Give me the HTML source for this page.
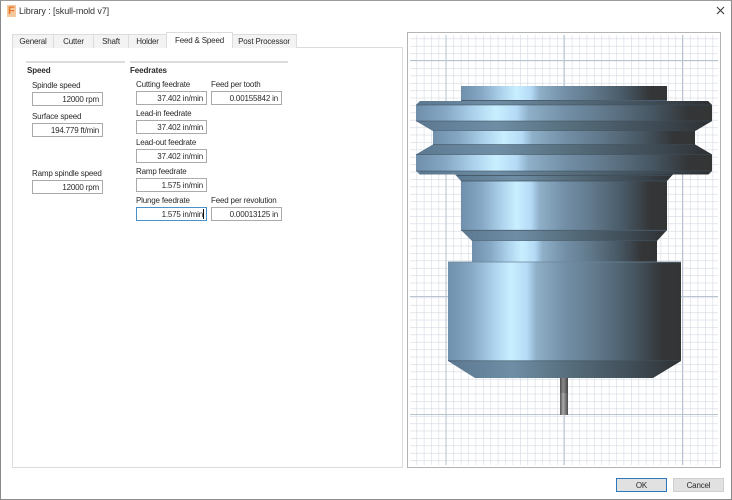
<!DOCTYPE html>
<html><head><meta charset="utf-8">
<style>
html,body{margin:0;padding:0;background:#fff}
#w{position:relative;width:732px;height:500px;overflow:hidden;background:#fff;font-family:"Liberation Sans",sans-serif;font-size:8px;letter-spacing:-.18px;color:#2a2a2a;filter:blur(.3px)}
#w div{position:absolute;box-sizing:border-box;white-space:nowrap}
.l{line-height:12px;height:12px}
.f{width:71px;height:14px;background:#fff;border:1px solid #aaa;text-align:right;padding-right:3px;line-height:13px}
.t{top:34px;height:14px;background:#f3f3f3;border:1px solid #dcdcdc;border-bottom:none;text-align:center;line-height:14px}
.s{height:2px;background:#dcdcdc;top:61px}
.h{font-weight:bold;top:65px;line-height:12px;letter-spacing:-.1px}
</style></head><body>
<div id="w">
<div style="left:0;top:0;width:732px;height:500px;border:1px solid #8a8a8a;border-top-color:#9a9a9a"></div>
<div style="left:7px;top:5px;width:9px;height:12px;background:#f5c9a0"></div>
<div style="left:8px;top:5px;width:8px;height:12px;color:#e8772a;font-weight:bold;font-size:11px;line-height:12px">F</div>
<div style="left:19px;top:5px;font-size:9px;letter-spacing:-.1px;line-height:13px;color:#333">Library : [skull-mold v7]</div>
<svg style="position:absolute;left:716px;top:6px" width="9" height="9" viewBox="0 0 9 9"><path d="M1 1L8 8M8 1L1 8" stroke="#333" stroke-width="1" fill="none"/></svg>

<div style="left:12px;top:47px;width:391px;height:421px;background:#fff;border:1px solid #dcdcdc"></div>
<div class="t" style="left:12px;width:42px">General</div>
<div class="t" style="left:53px;width:41px">Cutter</div>
<div class="t" style="left:93px;width:36px">Shaft</div>
<div class="t" style="left:128px;width:39px">Holder</div>
<div class="t" style="left:231px;width:66px">Post Processor</div>
<div class="t" style="left:166px;width:67px;top:32px;height:16px;background:#fff;line-height:15px">Feed &amp; Speed</div>

<div class="s" style="left:26px;width:99px"></div>
<div class="s" style="left:130px;width:158px"></div>
<div class="h" style="left:27px">Speed</div>
<div class="h" style="left:130px">Feedrates</div>

<div class="l" style="left:32px;top:80px">Spindle speed</div>
<div class="f" style="left:32px;top:92px">12000 rpm</div>
<div class="l" style="left:32px;top:111px">Surface speed</div>
<div class="f" style="left:32px;top:123px">194.779 ft/min</div>
<div class="l" style="left:32px;top:168px">Ramp spindle speed</div>
<div class="f" style="left:32px;top:180px">12000 rpm</div>

<div class="l" style="left:136px;top:79px">Cutting feedrate</div>
<div class="f" style="left:136px;top:91px">37.402 in/min</div>
<div class="l" style="left:211px;top:79px">Feed per tooth</div>
<div class="f" style="left:211px;top:91px">0.00155842 in</div>
<div class="l" style="left:136px;top:108px">Lead-in feedrate</div>
<div class="f" style="left:136px;top:120px">37.402 in/min</div>
<div class="l" style="left:136px;top:137px">Lead-out feedrate</div>
<div class="f" style="left:136px;top:149px">37.402 in/min</div>
<div class="l" style="left:136px;top:166px">Ramp feedrate</div>
<div class="f" style="left:136px;top:178px">1.575 in/min</div>
<div class="l" style="left:136px;top:195px">Plunge feedrate</div>
<div class="f" style="left:136px;top:207px;border-color:#4a90c8">1.575 in/min</div>
<div style="left:203px;top:209px;width:1px;height:10px;background:#111"></div>
<div class="l" style="left:211px;top:195px">Feed per revolution</div>
<div class="f" style="left:211px;top:207px">0.00013125 in</div>

<svg style="position:absolute;left:407px;top:32px" width="314" height="436" viewBox="407 32 314 436">
<defs>
<pattern id="g" x="446" y="60.7" width="7.4" height="7.4" patternUnits="userSpaceOnUse"><path d="M0 0V7.4M0 0H7.4" stroke="#d3dae2" stroke-width="1.2" fill="none"/></pattern>
<linearGradient id="m">
<stop offset="0" stop-color="#6f8fab"/><stop offset=".1" stop-color="#86a8c4"/><stop offset=".2" stop-color="#aed4ee"/><stop offset=".27" stop-color="#c8efff"/><stop offset=".34" stop-color="#b4daf6"/><stop offset=".38" stop-color="#8fb0c8"/><stop offset=".5" stop-color="#7390a8"/><stop offset=".65" stop-color="#5f7688"/><stop offset=".8" stop-color="#465662"/><stop offset=".92" stop-color="#333537"/><stop offset="1" stop-color="#333535"/>
</linearGradient>
<linearGradient id="d">
<stop offset="0" stop-color="#5b7890"/><stop offset=".27" stop-color="#6f8ea6"/><stop offset=".5" stop-color="#58707f"/><stop offset=".8" stop-color="#3f4c56"/><stop offset="1" stop-color="#2e3032"/>
</linearGradient>
<linearGradient id="sh"><stop offset="0" stop-color="#555"/><stop offset=".4" stop-color="#a8a8a8"/><stop offset="1" stop-color="#4a4a4a"/></linearGradient>
</defs>
<rect x="407.500" y="32.500" width="313" height="435" fill="#fff" stroke="#b4b4b4"/>
<rect x="410" y="35" width="308" height="430" fill="url(#g)"/>
<path d="M446 35V465M564 35V465M682.500 35V465M410 60.500H718M410 296.500H718M410 414.500H718" stroke="#b8c4d0" stroke-width="1" fill="none"/>

<rect x="461" y="86" width="206" height="15" fill="url(#m)"/>
<rect x="461" y="100" width="206" height="2" fill="#4c5f70"/>
<path d="M420 101H708L712 105V121L695 131H433L416 121V105Z" fill="url(#m)"/>
<path d="M420 101H708L712 105H416Z" fill="url(#d)"/>
<path d="M416 121H712L695 131H433Z" fill="url(#d)"/>
<path d="M416 105H712M416 121H712M433 131H695" stroke="#3f4f5c" stroke-width=".7" opacity=".7"/>
<rect x="433" y="131" width="262" height="14" fill="url(#m)"/>
<path d="M433 144.500H695L712 154.500V171L708.500 174.500H419.500L416 171V154.500Z" fill="url(#m)"/>
<path d="M433 144.500H695L712 154.500H416Z" fill="url(#d)"/>
<path d="M419.500 171H708.500V174.500H419.500Z" fill="url(#d)"/>
<path d="M433 144.500H695M416 154.500H712M416 171H712" stroke="#3f4f5c" stroke-width=".7" opacity=".7"/>
<path d="M455 174.500H673L667 181H461Z" fill="url(#d)"/>
<path d="M457 175.500H671" stroke="#3f4f5c" stroke-width=".7"/>
<rect x="461" y="181" width="206" height="49" fill="url(#m)"/>
<path d="M461 181H667" stroke="#3f4f5c" stroke-width=".8"/>
<path d="M461 230H667L657 241H472Z" fill="url(#d)"/>
<path d="M461 230.300H667M472 241H657" stroke="#4c5f70" stroke-width=".8"/>
<rect x="472" y="241" width="185" height="21" fill="url(#m)"/>
<rect x="448" y="262" width="233" height="99" fill="url(#m)"/>
<path d="M448 262H681" stroke="#6c8496" stroke-width=".8"/>
<path d="M448 361H681L653 378H475Z" fill="url(#d)"/>
<path d="M448 360.800H681" stroke="#3f4f5c" stroke-width=".7"/>
<rect x="560" y="378" width="8" height="37" fill="url(#sh)"/>
<rect x="560" y="378" width="8" height="15" fill="#333" opacity=".25"/>
</svg>

<div style="left:616px;top:478px;width:51px;height:14px;background:#e1e1e1;border:1px solid #2c79bd;text-align:center;line-height:13px">OK</div>
<div style="left:673px;top:478px;width:51px;height:14px;background:#e1e1e1;border:1px solid #d0d0d0;text-align:center;line-height:13px">Cancel</div>
</div>
</body></html>
